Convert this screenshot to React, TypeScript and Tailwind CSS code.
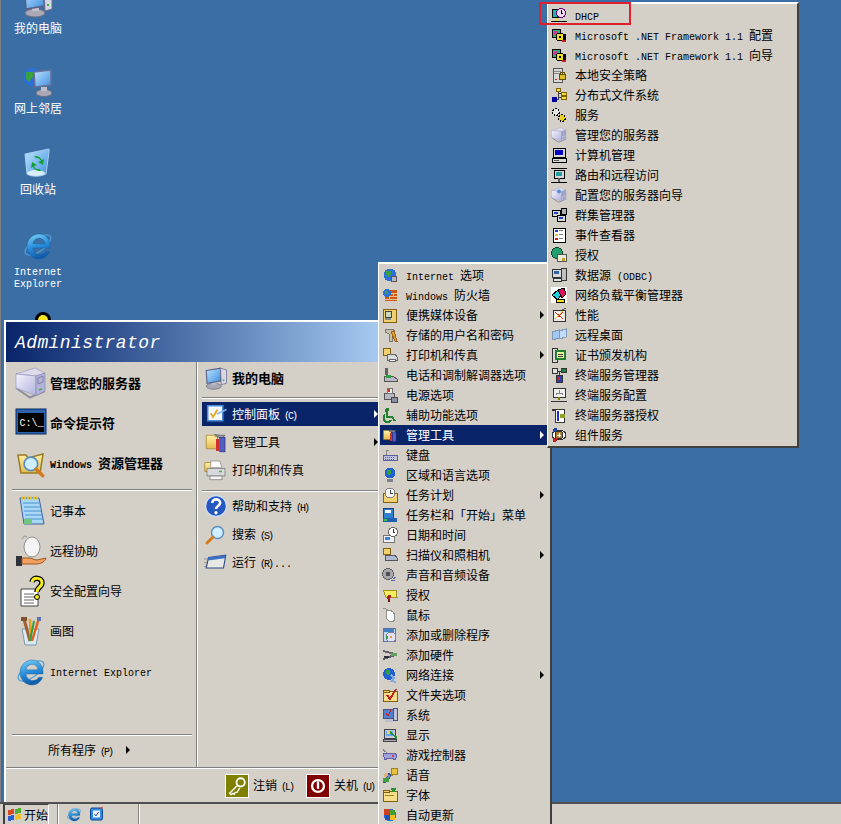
import type { ReactNode } from "react"

// text in the old bitmap style: latin is 6px wide, han is 12px wide
function T({ children, bold }: { children: string; bold?: boolean }) {
  const parts = children.split(/([\x00-\x7f]+)/).filter(Boolean)
  return (
    <span className={bold ? "whitespace-pre font-bold" : "whitespace-pre"}>
      {parts.map((p, i) => {
        if (!/^[\x00-\x7f]/.test(p)) {
          return <span key={i} className={bold ? "text-[13px]" : "text-[12px]"}>{p}</span>
        }
        // mnemonic like " (C)" sits tighter than the rest
        const m = p.match(/^( \(\w\))(.*)$/)
        if (m) {
          return (
            <span key={i} className="font-['Liberation_Mono',monospace] text-[10px]">
              <span className="tracking-[-2px]">{m[1]}</span>
              <span className="ml-[2px]">{m[2]}</span>
            </span>
          )
        }
        return <span key={i} className="font-['Liberation_Mono',monospace] text-[10px]">{p}</span>
      })}
    </span>
  )
}

const S = ({ children }: { children: ReactNode }) => (
  <svg className="h-4 w-4 shrink-0" viewBox="0 0 16 16" shapeRendering="crispEdges">{children}</svg>
)
const M = ({ children, size = 24 }: { children: ReactNode; size?: number }) => (
  <svg style={{ width: size, height: size }} className="shrink-0" viewBox="0 0 32 32">{children}</svg>
)
const L = ({ children }: { children: ReactNode }) => (
  <svg className="h-8 w-8 shrink-0" viewBox="0 0 32 32">{children}</svg>
)

const Defs = () => (
  <svg className="absolute h-0 w-0">
    <defs>
      <linearGradient id="ie" x1="0" y1="0" x2="0.3" y2="1">
        <stop offset="0" stopColor="#7fd4f7" />
        <stop offset="0.55" stopColor="#2b8fdc" />
        <stop offset="1" stopColor="#0f5cab" />
      </linearGradient>
      <linearGradient id="box" x1="0" y1="0" x2="1" y2="1">
        <stop offset="0" stopColor="#f4f4fc" />
        <stop offset="1" stopColor="#b0b0dc" />
      </linearGradient>
      <linearGradient id="screen" x1="0" y1="0" x2="1" y2="1">
        <stop offset="0" stopColor="#bfe4ff" />
        <stop offset="1" stopColor="#3d8fe0" />
      </linearGradient>
      <linearGradient id="fold" x1="0" y1="0" x2="0" y2="1">
        <stop offset="0" stopColor="#fff2a8" />
        <stop offset="1" stopColor="#e6bb50" />
      </linearGradient>
    </defs>
  </svg>
)

/* shared drawings, all on a 32 grid */
const IeShape = () => (
  <>
    <ellipse cx="16" cy="16" rx="15" ry="6.5" transform="rotate(-35 16 16)" fill="none" stroke="#4f9fd8" strokeWidth="1.3" />
    <path
      fillRule="evenodd"
      fill="url(#ie)"
      stroke="#0d5aa0"
      strokeWidth="0.4"
      d="M27 19H11c.5 4 3 6.5 6.7 6.5 2.7 0 4.7-1.1 6-3.2h3.9C25.6 27 22 30 17 30 10.500 30 5 24.500 5 17.500S10.500 5 17 5c7 0 11 5.500 11 12 0 .700 0 1.300-.1 2zM11 14.800h12c-.5-3.400-2.800-5.500-6-5.500s-5.500 2.100-6 5.500z"
    />
  </>
)
const ComputerShape = () => (
  <>
    <ellipse cx="13" cy="27" rx="10" ry="4" fill="#a9a9b8" stroke="#70707c" />
    <rect x="10" y="21" width="7" height="4" fill="#c0c0cc" />
    <path d="M3 6l19-3v17L4 23z" fill="url(#screen)" stroke="#5a5f88" strokeWidth="1.5" />
    <path d="M22 3l8 2v18l-7 2z" fill="#d6d6e4" stroke="#6e6e90" />
    <rect x="25" y="18" width="2" height="2" fill="#33bb33" />
  </>
)
const BoxShape = () => (
  <>
    <path d="M1 21l14 9.500 15-6.500" fill="none" stroke="#90909c" strokeWidth="2" />
    <path d="M1 7L20 1l10 5-9 3z" fill="#dcdcec" stroke="#9090b8" strokeWidth="0.6" />
    <path d="M1 7l20 2v19.500L1 21z" fill="url(#box)" stroke="#9090b8" strokeWidth="0.6" />
    <path d="M21 9l9-3v18l-9 4.500z" fill="#b4b4da" stroke="#8080ac" strokeWidth="0.6" />
    <path d="M23 11l5-2v6l-5 2z" fill="none" stroke="#8080a8" />
    <path d="M24 23l3-1.300" stroke="#44aa44" strokeWidth="1.500" />
  </>
)
const Lens = () => (
  <>
    <circle cx="14" cy="14" r="8" fill="#cfeeff" stroke="#5a8fc0" strokeWidth="2" />
    <path d="M20 20l8 8" stroke="#d47a20" strokeWidth="4" strokeLinecap="round" />
  </>
)
const Printer = () => (
  <>
    <path d="M9 4h12l3 9H9z" fill="#fff" stroke="#888" />
    <path d="M4 14h24v10H4z" fill="#d8d8dc" stroke="#777" />
    <rect x="8" y="24" width="16" height="5" fill="#f4f4f4" stroke="#777" />
    <rect x="20" y="17" width="4" height="2" fill="#4a4" />
  </>
)
const Tools = () => (
  <>
    <path d="M3 7h10l2 2h3v16H3z" fill="url(#fold)" stroke="#a08020" />
    <path d="M14 6l8 1 6 0-5 5z" fill="#a0a0b0" stroke="#555" />
    <rect x="16" y="12" width="4" height="16" fill="#d03030" />
    <rect x="21" y="10" width="7" height="19" fill="#5060c0" stroke="#303080" />
  </>
)

const g = { fold: "#f0d070", line: "#806010", gray: "#a0a0a8", dark: "#404048" }

const SFolder = () => (
  <>
    <rect x="1" y="4" width="14" height="10" fill="#f6de88" stroke={g.line} />
    <rect x="1" y="3" width="6" height="2" fill={g.fold} stroke={g.line} />
  </>
)
const SGlobe = () => (
  <>
    <circle cx="8" cy="8" r="6.500" fill="#2a70d8" />
    <path d="M4 4h5v3l-3 3-2-2zM10 9h3l-1 4-2 0z" fill="#3aa040" />
  </>
)
const SMon = ({ c = "#3060d0" }: { c?: string }) => (
  <>
    <rect x="2" y="2" width="11" height="9" fill="#c8c8d8" stroke={g.dark} />
    <rect x="4" y="4" width="7" height="5" fill={c} />
    <rect x="1" y="12" width="13" height="2" fill="#b0b0b8" stroke={g.dark} />
  </>
)

const controlItems: { label: string; icon: ReactNode; sub?: boolean }[] = [
  { label: "Internet 选项", icon: <S><SGlobe /><rect x="9" y="9" width="5" height="5" fill="#b8b8c4" stroke="#555" /></S> },
  { label: "Windows 防火墙", icon: <S><rect x="3" y="3" width="12" height="11" fill="#c85a18" /><path d="M3 6h12M3 9h12M3 12h12M7 3v3M11 6v3M7 9v3" stroke="#f0c090" /><circle cx="5" cy="6" r="4" fill="#2a70d8" /><rect x="3" y="4" width="3" height="3" fill="#3aa040" /></S> },
  { label: "便携媒体设备", sub: true, icon: <S><rect x="1" y="2" width="13" height="13" fill={g.fold} stroke={g.line} /><rect x="3" y="4" width="6" height="6" fill="#c8d8c0" stroke="#444" /><rect x="3" y="11" width="6" height="2" fill="#888" /></S> },
  { label: "存储的用户名和密码", icon: <S><path d="M3 2h8l2 3-3 2v7H7V7L3 5z" fill="#c8c0a8" stroke="#777" /><path d="M9 5l4 9h2l-3-10z" fill="#e0a030" stroke="#a06010" /></S> },
  { label: "打印机和传真", sub: true, icon: <S><rect x="1" y="1" width="7" height="7" fill={g.fold} stroke={g.line} /><path d="M5 7h8l2 3v3H5z" fill="#d8dce0" stroke="#666" /><rect x="7" y="12" width="6" height="2" fill="#fff" stroke="#666" /></S> },
  { label: "电话和调制解调器选项", icon: <S><rect x="3" y="1" width="3" height="7" fill="#606068" /><path d="M2 9h9l4 3v2H2z" fill="#b8b8c8" stroke="#555" /><rect x="4" y="8" width="5" height="3" fill="#30a040" /></S> },
  { label: "电源选项", icon: <S><rect x="2" y="6" width="10" height="6" fill="#b8b8c4" stroke="#555" /><rect x="5" y="1" width="5" height="5" fill="#f0f0f0" stroke="#777" /><rect x="6" y="2" width="2" height="3" fill="#d83030" /><rect x="9" y="10" width="6" height="5" fill="#8890a8" stroke="#444" /></S> },
  { label: "辅助功能选项", icon: <S><circle cx="5" cy="3" r="2" fill="#208030" /><path d="M5 5v5h5l3 4" fill="none" stroke="#208030" strokeWidth="2" /><path d="M3 8a4 4 0 1 0 6 5" fill="none" stroke="#208030" strokeWidth="2" /></S> },
  { label: "管理工具", sub: true, icon: <M size={16}><Tools /></M> },
  { label: "键盘", icon: <S><path d="M1 8h14v5H1z" fill="#c0c0e0" stroke="#6060a0" /><path d="M3 10h10M3 12h10" stroke="#6060a0" strokeDasharray="1 1" /><path d="M4 8V3h3" fill="none" stroke="#888" /></S> },
  { label: "区域和语言选项", icon: <S><circle cx="8" cy="6" r="5.500" fill="#2060d0" /><path d="M5 3h4v3l-2 3-2-2z" fill="#30a040" /><rect x="5" y="12" width="6" height="3" fill="#808088" /></S> },
  { label: "任务计划", sub: true, icon: <S><rect x="1" y="6" width="14" height="9" fill={g.fold} stroke={g.line} /><circle cx="8" cy="6" r="5" fill="#f4f4f4" stroke="#808080" /><path d="M8 3v3h3" fill="none" stroke="#444" /></S> },
  { label: "任务栏和「开始」菜单", icon: <S><rect x="1" y="1" width="10" height="10" fill="#3080d0" stroke="#204080" /><rect x="3" y="3" width="6" height="3" fill="#fff" /><rect x="1" y="11" width="14" height="4" fill="#2060b0" /><rect x="2" y="12" width="3" height="2" fill="#40c040" /></S> },
  { label: "日期和时间", icon: <S><rect x="1" y="8" width="11" height="7" fill="#f0f0f4" stroke="#777" /><circle cx="11" cy="5" r="4.500" fill="#fff" stroke="#666" /><path d="M11 2v3h2" fill="none" stroke="#333" /><rect x="3" y="10" width="5" height="3" fill="#4080d0" /></S> },
  { label: "扫描仪和照相机", sub: true, icon: <S><rect x="1" y="1" width="7" height="6" fill={g.fold} stroke={g.line} /><path d="M3 8h10l2 3v2H3z" fill="#b0b8d0" stroke="#556" /><rect x="5" y="13" width="8" height="1" fill="#555" /></S> },
  { label: "声音和音频设备", icon: <S><circle cx="6" cy="7" r="5.500" fill="#a8a8ac" stroke="#606064" /><circle cx="6" cy="7" r="2.500" fill="#505054" /><path d="M11 12l3-2M9 14l4-1" stroke="#6060c0" /></S> },
  { label: "授权", icon: <S><path d="M1 3h13l1 7H4z" fill="#f4ee60" stroke="#a09020" /><circle cx="7" cy="10" r="2" fill="#b02020" /><rect x="6" y="12" width="2" height="3" fill="#701010" /></S> },
  { label: "鼠标", icon: <S><path d="M6 3c4 0 7 3 7 7s-2 5-4 5-5-3-5-7c0-3 0-5 2-5z" fill="#fafafa" stroke="#909090" /><path d="M1 1c2 0 3 1 5 2" fill="none" stroke="#909090" /></S> },
  { label: "添加或删除程序", icon: <S><rect x="1" y="1" width="12" height="13" fill="#c0d8f0" stroke="#6070a0" /><rect x="2" y="2" width="10" height="3" fill="#4080c0" /><circle cx="9" cy="10" r="5" fill="#e0e0f8" stroke="#8080a0" /><circle cx="9" cy="10" r="1.500" fill="#e0a030" /><rect x="4" y="9" width="2" height="3" fill="#30a040" /></S> },
  { label: "添加硬件", icon: <S><path d="M1 4l12 3M1 12l12-4" stroke="#606068" strokeWidth="2" /><rect x="9" y="6" width="6" height="3" fill="#60a060" /><rect x="2" y="9" width="5" height="2" fill="#303038" /></S> },
  { label: "网络连接", sub: true, icon: <S><circle cx="7" cy="7" r="6" fill="#2060d0" /><path d="M4 3h4v3L6 9 4 7z" fill="#30a040" /><path d="M9 8l3 3-2 3 4 1" fill="none" stroke="#80a8e0" strokeWidth="2" /></S> },
  { label: "文件夹选项", icon: <S><SFolder /><path d="M5 8l3 4 6-10" fill="none" stroke="#c02020" strokeWidth="2" /></S> },
  { label: "系统", icon: <S><rect x="1" y="2" width="10" height="9" fill="#5080d0" stroke="#505080" /><path d="M4 6l2 3 3-6" fill="none" stroke="#d02020" /><rect x="11" y="1" width="4" height="12" fill="#c0c0d8" stroke="#505080" /><rect x="3" y="12" width="8" height="3" fill="#c0c0c8" /></S> },
  { label: "显示", icon: <S><SMon c="#60a8f0" /><path d="M8 5l7 6" stroke="#309030" strokeWidth="2" /><rect x="5" y="4" width="3" height="3" fill="#f0d060" /></S> },
  { label: "游戏控制器", icon: <S><path d="M1 7l4-1h8l2 3-2 4-3-2H6l-3 2z" fill="#a0a0e0" stroke="#6060a0" /><path d="M1 2c1 2 3 3 4 4" fill="none" stroke="#808088" /><rect x="10" y="8" width="2" height="2" fill="#d04040" /></S> },
  { label: "语音", icon: <S><path d="M9 1h6v6h-3l-3 2z" fill="#e8c040" stroke="#a08020" /><path d="M7 6l2 3-5 6H2z" fill="#7090d0" stroke="#405080" /><circle cx="4" cy="8" r="2" fill="#e0b080" /><rect x="1" y="11" width="6" height="4" fill="#40a040" /></S> },
  { label: "字体", icon: <S><SFolder /><path d="M9 1l5 0-1 4h-3z" fill="#309030" /><rect x="3" y="8" width="9" height="1" fill="#a08020" /></S> },
  { label: "自动更新", icon: <S><circle cx="8" cy="8" r="6.500" fill="#2a70d8" /><rect x="2" y="2" width="6" height="6" fill="#d04020" /><rect x="8" y="3" width="5" height="5" fill="#40a030" /><rect x="3" y="8" width="5" height="5" fill="#2050c0" /><rect x="8" y="8" width="5" height="5" fill="#f0c020" /></S> },
]

const NetGear = () => (
  <S>
    <rect x="1" y="2" width="8" height="8" fill="#30b070" stroke="#000" />
    <rect x="3" y="4" width="4" height="4" fill="#c04090" />
    <circle cx="9" cy="10" r="4" fill="#f0e020" stroke="#000" />
    <rect x="8" y="9" width="2" height="2" fill="#000" />
    <rect x="12" y="7" width="3" height="6" fill="#000" />
    <rect x="11" y="13" width="4" height="2" fill="#c02020" />
  </S>
)

const adminItems: { label: string; icon: ReactNode }[] = [
  { label: "DHCP", icon: <S><rect x="1" y="2" width="7" height="8" fill="#20b0b0" stroke="#000" /><circle cx="10" cy="6" r="4.500" fill="#f0d8f0" stroke="#700070" /><path d="M10 3v3h2" fill="none" stroke="#000" /><rect x="5" y="11" width="2" height="3" fill="#e0e020" /><path d="M0 14h16" stroke="#000" /></S> },
  { label: "Microsoft .NET Framework 1.1 配置", icon: <NetGear /> },
  { label: "Microsoft .NET Framework 1.1 向导", icon: <NetGear /> },
  { label: "本地安全策略", icon: <S><rect x="2" y="1" width="9" height="14" fill="#d8d8d8" stroke="#555" /><path d="M3 4h7M3 6h7" stroke="#888" /><rect x="4" y="12" width="2" height="1" fill="#d02020" /><rect x="8" y="7" width="6" height="5" fill="#e0c020" stroke="#605000" /><path d="M9 7V5h4v2" fill="none" stroke="#605000" /></S> },
  { label: "分布式文件系统", icon: <S><path d="M7 3v9M7 6h4M7 10h4M5 12h3" fill="none" stroke="#444" /><rect x="5" y="1" width="4" height="3" fill="#f0e040" stroke="#806000" /><rect x="10" y="5" width="5" height="3" fill="#f0e040" stroke="#806000" /><rect x="10" y="9" width="5" height="3" fill="#f0e040" stroke="#806000" /><rect x="1" y="10" width="5" height="5" fill="#0000a0" /></S> },
  { label: "服务", icon: <S><circle cx="5" cy="5" r="3.500" fill="#e8e8e8" stroke="#000" strokeDasharray="2 1" strokeWidth="1.500" /><circle cx="11" cy="11" r="3.500" fill="#e8d020" stroke="#000" strokeDasharray="2 1" strokeWidth="1.500" /></S> },
  { label: "管理您的服务器", icon: <M size={16}><BoxShape /></M> },
  { label: "计算机管理", icon: <S><rect x="2" y="1" width="12" height="9" fill="#d8d8d8" stroke="#000" /><rect x="4" y="3" width="8" height="5" fill="#0000c0" /><rect x="1" y="11" width="14" height="4" fill="#d8d8d8" stroke="#000" /><rect x="3" y="13" width="5" height="1" fill="#606060" /></S> },
  { label: "路由和远程访问", icon: <S><path d="M0 1h16M0 15h16" stroke="#000" /><rect x="3" y="3" width="10" height="8" fill="#d8d8d8" stroke="#000" /><rect x="5" y="5" width="6" height="4" fill="#20a0a0" /><rect x="7" y="11" width="2" height="4" fill="#606060" /></S> },
  { label: "配置您的服务器向导", icon: <M size={16}><BoxShape /><circle cx="16" cy="9" r="4" fill="#5090e0" /></M> },
  { label: "群集管理器", icon: <S><rect x="1" y="3" width="8" height="6" fill="#d8d8d8" stroke="#000" /><rect x="3" y="5" width="4" height="2" fill="#2040c0" /><rect x="6" y="8" width="8" height="6" fill="#d8d8d8" stroke="#000" /><rect x="8" y="10" width="4" height="2" fill="#2040c0" /><rect x="10" y="1" width="5" height="6" fill="#b0b0b0" stroke="#000" /></S> },
  { label: "事件查看器", icon: <S><rect x="2" y="1" width="12" height="14" fill="#fff" stroke="#000" /><rect x="4" y="3" width="3" height="2" fill="#2040d0" /><rect x="8" y="3" width="4" height="1" fill="#808080" /><rect x="4" y="7" width="3" height="2" fill="#e0c020" /><rect x="8" y="7" width="4" height="1" fill="#808080" /><rect x="4" y="11" width="3" height="2" fill="#d02020" /><rect x="8" y="11" width="4" height="1" fill="#808080" /></S> },
  { label: "授权", icon: <S><circle cx="6" cy="6" r="5.500" fill="#20a070" stroke="#104030" /><rect x="6" y="7" width="9" height="7" fill="#e8e8d8" stroke="#555" /><rect x="11" y="11" width="3" height="3" fill="#c0a020" /></S> },
  { label: "数据源 (ODBC)", icon: <S><rect x="1" y="2" width="9" height="8" fill="#d8d8d8" stroke="#333" /><rect x="3" y="4" width="5" height="3" fill="#3060b0" /><rect x="10" y="1" width="5" height="12" fill="#c0c0c0" stroke="#333" /><rect x="2" y="11" width="8" height="3" fill="#e0e0e0" stroke="#333" /></S> },
  { label: "网络负载平衡管理器", icon: <S><rect x="0" y="0" width="16" height="16" fill="#fff" /><path d="M1 8l6-5 3 5-3 5z" fill="#20d0e0" stroke="#000" /><path d="M7 3l6-2 2 6-4 4z" fill="#e01060" stroke="#000" /><rect x="5" y="12" width="8" height="3" fill="#f0e020" stroke="#000" /></S> },
  { label: "性能", icon: <S><rect x="2" y="3" width="12" height="11" fill="#e8e8e8" stroke="#333" /><rect x="4" y="5" width="8" height="7" fill="#fffff0" /><path d="M4 5l8 7M12 5l-8 7" stroke="#d02020" /><path d="M4 12l3-3 5-5" stroke="#e0c020" /><path d="M11 3l4-2" stroke="#555" /></S> },
  { label: "远程桌面", icon: <S><path d="M1 5l7-2v8l-7 2z" fill="#a0c8f0" stroke="#8098b8" /><path d="M8 4l7-2v8l-7 2z" fill="#c0dcf8" stroke="#8098b8" /></S> },
  { label: "证书颁发机构", icon: <S><rect x="1" y="1" width="5" height="14" fill="#d8d8d8" stroke="#333" /><rect x="4" y="3" width="11" height="10" fill="#208030" /><rect x="6" y="5" width="7" height="6" fill="#f0f0a0" /><path d="M7 7h5M7 9h5" stroke="#404040" /></S> },
  { label: "终端服务管理器", icon: <S><rect x="1" y="1" width="5" height="5" fill="#e0e0e0" stroke="#333" /><rect x="10" y="1" width="5" height="4" fill="#208040" stroke="#333" /><path d="M6 4h4M8 4v5" fill="none" stroke="#333" /><rect x="5" y="8" width="6" height="7" fill="#2040c0" stroke="#333" /><rect x="7" y="10" width="2" height="3" fill="#e02020" /></S> },
  { label: "终端服务配置", icon: <S><rect x="2" y="1" width="12" height="9" fill="#f0f0f0" stroke="#333" /><path d="M8 3v3M5 8V6h6v2" fill="none" stroke="#808080" /><rect x="7" y="10" width="2" height="3" fill="#808000" /><path d="M0 14h16" stroke="#333" /></S> },
  { label: "终端服务器授权", icon: <S><path d="M1 3h9" stroke="#333" strokeWidth="2" /><rect x="4" y="2" width="9" height="13" fill="#fff" stroke="#333" /><rect x="6" y="4" width="2" height="10" fill="#2030c0" /><rect x="9" y="7" width="5" height="4" fill="#90a020" /></S> },
  { label: "组件服务", icon: <S><ellipse cx="8" cy="8" rx="7" ry="5" fill="#fff" stroke="#333" /><circle cx="8" cy="8" r="4" fill="#b08030" stroke="#333" /><path d="M6 8h4M8 6v4" stroke="#fff" /><circle cx="4" cy="3" r="2" fill="#2040a0" /><circle cx="4" cy="13" r="2" fill="#c02020" /></S> },
]

const Arrow = () => <span className="h-0 w-0 shrink-0 border-y-[4px] border-l-[4px] border-y-transparent border-l-current" />

const Sep = ({ className }: { className: string }) => (
  <div className={`h-[2px] border-t border-b border-t-[#808080] border-b-white ${className}`} />
)

function DesktopIcon({ icon, label, className }: { icon: ReactNode; label: ReactNode; className: string }) {
  return (
    <div className={`absolute flex w-[72px] flex-col items-center text-center leading-[12px] text-white ${className}`}>
      {icon}
      <div className="mt-[4px]">{label}</div>
    </div>
  )
}

function BigRow({ icon, label, bold }: { icon: ReactNode; label: string; bold?: boolean }) {
  return (
    <div className="flex h-10 items-center gap-[3px] pl-[9px]">
      {icon}
      <T bold={bold}>{label}</T>
    </div>
  )
}

function PlaceRow({ icon, label, bold, active, sub }: { icon: ReactNode; label: string; bold?: boolean; active?: boolean; sub?: boolean }) {
  return (
    <div className={active ? "flex h-6 items-center gap-1 bg-[#0a246a] pl-[2px] pr-[1px] text-white" : "flex h-6 items-center gap-1 pl-[2px] pr-[1px]"}>
      {icon}
      <T bold={bold}>{label}</T>
      {sub && <span className="ml-auto flex"><Arrow /></span>}
    </div>
  )
}

export default function App() {
  return (
    <div className="relative h-[824px] w-[841px] overflow-hidden bg-[#3a6ea5] font-['Noto_Sans_CJK_SC',sans-serif] text-[12px] text-black">
      <Defs />
      <div className="absolute inset-y-0 left-0 w-[1px] bg-[#808080]" />

      {/* desktop icons */}
      <DesktopIcon className="left-[2px] top-[-14px]" label={<T>我的电脑</T>} icon={<L><ComputerShape /></L>} />
      <DesktopIcon className="left-[2px] top-[66px]" label={<T>网上邻居</T>} icon={<L><circle cx="10" cy="11" r="9" fill="#2a70d8" /><path d="M4 6h7v5l-4 5-3-3z" fill="#3aa040" /><path d="M12 6l17-2v15l-16 2z" fill="url(#screen)" stroke="#6a6f98" strokeWidth="1.500" /><ellipse cx="22" cy="27" rx="8" ry="3.500" fill="#a9a9b8" stroke="#70707c" /><rect x="19" y="21" width="6" height="4" fill="#c0c0cc" /></L>} />
      <DesktopIcon className="left-[2px] top-[147px]" label={<T>回收站</T>} icon={<L><path d="M3 7l24-5 0 3-3 22c-6 3-14 3-19 0z" fill="url(#screen)" stroke="#a8d0f0" /><ellipse cx="14" cy="26" rx="9" ry="3" fill="#d8ecfa" /><path d="M14 11a5 5 0 0 1 5 3l-3 1 5 3 1-6-2 1a8 8 0 0 0-8-4zM18 22a5 5 0 0 1-6-3l3-1-5-3-1 6 2-1a8 8 0 0 0 8 4z" fill="#10a030" /></L>} />
      <DesktopIcon
        className="left-[2px] top-[229px]"
        label={
          <div className="-mt-[1px] flex flex-col">
            <div className="h-3"><T>Internet</T></div>
            <div className="h-3"><T>Explorer</T></div>
          </div>
        }
        icon={<L><IeShape /></L>}
      />
      <div className="absolute left-[35px] top-[312px] h-[16px] w-[16px] rounded-full border-[3px] border-black bg-[#f8e820]" />

      {/* start menu */}
      <div className="absolute left-[4px] top-[320px] flex w-[375px] flex-col border-l-2 border-t-2 border-white bg-[#d4d0c8]">
        <div className="flex h-10 items-center bg-gradient-to-r from-[#0a246a] to-[#a6caf0] pl-[9px] pt-[2px] font-['Liberation_Mono',monospace] text-[18px] italic tracking-[0.4px] text-white">
          Administrator
        </div>
        <div className="flex h-[405px]">
          <div className="flex w-[190px] flex-col pt-px">
            <BigRow bold label="管理您的服务器" icon={<L><BoxShape /></L>} />
            <BigRow bold label="命令提示符" icon={<L><rect x="1" y="2" width="30" height="25" fill="#2a62b0" stroke="#0a2a60" /><rect x="3" y="6" width="26" height="19" fill="#000" /><text x="4.500" y="19" fill="#fff" fontSize="10" fontFamily="Liberation Mono">C:\_</text></L>} />
            <BigRow bold label="Windows 资源管理器" icon={<L><path d="M3 8h8l2 3 15-4-3 19H6z" fill="url(#fold)" stroke="#9a7a20" strokeWidth="1.500" /><g transform="translate(4 5) scale(.85)"><Lens /></g></L>} />
            <Sep className="ml-[6px] mr-[4px] mt-[6px]" />
            <BigRow label="记事本" icon={<L><path d="M5 3h19l5 26H9z" fill="#a8d8f4" stroke="#4060a0" /><path d="M8 8h16M9 12h16M9 16h17M10 20h17M10 24h18" stroke="#4a90d0" /><path d="M6 3h18" stroke="#e0c030" strokeWidth="3" strokeDasharray="2 1" /><path d="M9 24h8v5H9z" fill="#70c880" /></L>} />
            <BigRow label="远程协助" icon={<L><ellipse cx="17" cy="12" rx="8" ry="10" fill="#f4f4f4" stroke="#909090" /><path d="M12 2c-3-2-5 0-4 2" fill="none" stroke="#909090" /><rect x="1" y="21" width="6" height="10" fill="#303038" /><path d="M7 23h7c3 0 5 2 8 2l9-2c0 3-5 6-10 6H7z" fill="#f0a060" stroke="#a05820" /></L>} />
            <BigRow label="安全配置向导" icon={<L><path d="M6 14h14l3 3v14H6z" fill="#fff" stroke="#444" /><path d="M9 19h10M9 22h10M9 25h10M9 28h10" stroke="#666" /><path d="M17 7c1-5 10-5 10 1 0 4-5 4-5 9" fill="none" stroke="#000" strokeWidth="5.500" /><path d="M17 7c1-5 10-5 10 1 0 4-5 4-5 9" fill="none" stroke="#f8ec20" strokeWidth="3" /><circle cx="22" cy="22" r="2.500" fill="#f8ec20" stroke="#000" /></L>} />
            <BigRow label="画图" icon={<L><path d="M7 14h17l-3 16H10z" fill="#d8ecf4" stroke="#8098a8" /><path d="M9 4l6 22" stroke="#a06030" strokeWidth="3" /><path d="M15 4l1 22" stroke="#e0a020" strokeWidth="2.500" /><path d="M24 3l-7 23" stroke="#e06020" strokeWidth="2.500" /><path d="M19 6l-4 20" stroke="#30a040" strokeWidth="2" /><rect x="6" y="2" width="6" height="4" fill="#805030" /><rect x="22" y="2" width="4" height="4" fill="#6070b0" /></L>} />
            <BigRow label="Internet Explorer" icon={<L><IeShape /></L>} />
            <Sep className="ml-[6px] mr-[4px] mt-auto" />
            <div className="mb-[3px] flex h-7 items-center gap-[12px] pl-[42px]">
              <T>所有程序 (P)</T>
              <Arrow />
            </div>
          </div>
          <div className="w-[2px] border-l border-r border-l-[#808080] border-r-white" />
          <div className="flex flex-1 flex-col pl-[4px] pt-[4px]">
            <PlaceRow bold label="我的电脑" icon={<M><ComputerShape /></M>} />
            <Sep className="mt-[7px] mb-[3px]" />
            <div className="flex flex-col gap-1">
              <PlaceRow active sub label="控制面板 (C)" icon={<M><rect x="3" y="3" width="24" height="24" fill="#5088d8" stroke="#0a2a70" strokeWidth="2" /><rect x="6" y="6" width="18" height="18" fill="#f4f8ff" /><path d="M9 15l3 5 6-10" fill="none" stroke="#e8a820" strokeWidth="2.500" /><path d="M17 16l13-6" stroke="#80b8f0" strokeWidth="2" /></M>} />
              <PlaceRow sub label="管理工具" icon={<M><Tools /></M>} />
              <PlaceRow label="打印机和传真" icon={<M><path d="M1 6h10v12H1z" fill="url(#fold)" stroke="#a08020" /><Printer /></M>} />
            </div>
            <Sep className="mt-2 mb-[2px]" />
            <div className="flex flex-col gap-1">
              <PlaceRow label="帮助和支持 (H)" icon={<M><circle cx="16" cy="16" r="14" fill="#2458c0" stroke="#d0dcf0" strokeWidth="2" /><path d="M11 12c0-6.500 10.500-6.500 10.500 0 0 4-5.500 4-5.500 8" fill="none" stroke="#fff" strokeWidth="3.500" /><circle cx="16" cy="25" r="2.200" fill="#fff" /></M>} />
              <PlaceRow label="搜索 (S)" icon={<M><g transform="scale(-1 1) translate(-32 0)"><Lens /></g></M>} />
              <PlaceRow label="运行 (R)..." icon={<M><path d="M6 10l23-3-3 17H3z" fill="#e8e8e4" stroke="#304880" strokeWidth="1.500" /><path d="M6 10l23-3-1 4-23 3z" fill="#3a70c8" /><path d="M0 12h5M0 17h4M0 22h3" stroke="#808080" /></M>} />
            </div>
          </div>
        </div>
        <Sep className="" />
        <div className="flex h-[33px] items-center pl-[219px]">
          <div className="flex w-[81px] items-center gap-1">
            <svg className="h-6 w-6 shrink-0 border border-white bg-[#808000]" viewBox="0 0 24 24">
              <circle cx="16" cy="8" r="4.500" fill="none" stroke="#fff" strokeWidth="2" />
              <path d="M13 11l-9 9 1.500 1.500 2-1.500 1.500 1 1-2 2 0 3-5" fill="none" stroke="#fff" strokeWidth="1.500" />
            </svg>
            <T>注销 (L)</T>
          </div>
          <div className="flex items-center gap-1">
            <svg className="h-6 w-6 shrink-0 border border-white bg-[#800000]" viewBox="0 0 24 24">
              <circle cx="12" cy="12" r="6.500" fill="none" stroke="#fff" strokeWidth="2.500" />
              <path d="M12 7v8" stroke="#fff" strokeWidth="2.500" />
            </svg>
            <T>关机 (U)</T>
          </div>
        </div>
      </div>

      {/* taskbar */}
      <div className="absolute inset-x-0 bottom-0 flex h-[22px] items-center border-t-2 border-t-[#505050] bg-[#d4d0c8]">
        <div className="ml-[3px] flex h-full w-[46px] items-center gap-[1px] border-l-2 border-t border-r border-l-[#404040] border-t-[#404040] border-r-white pl-[2px]">
          <S>
            <path d="M1 3l6-1v5l-6 1z" fill="#d84a20" />
            <path d="M8 2l6-1v5l-6 1z" fill="#50b030" />
            <path d="M1 9l6-1v5l-6 1z" fill="#2860d0" />
            <path d="M8 8l6-1v5l-6 1z" fill="#f0c020" />
          </S>
          <T>开始</T>
        </div>
        <div className="ml-[8px] h-full w-[2px] border-l border-r border-l-[#808080] border-r-white" />
        <div className="ml-[7px] flex gap-[7px]">
          <M size={16}><IeShape /></M>
          <M size={16}><rect x="3" y="4" width="24" height="24" rx="3" fill="#3088e0" stroke="#104890" strokeWidth="2" /><rect x="8" y="9" width="14" height="14" fill="#f0f4ff" /><path d="M11 16l3 4 5-8" fill="none" stroke="#2050b0" strokeWidth="2" /><path d="M22 5l6-3" stroke="#e04020" strokeWidth="2" /></M>
        </div>
        <div className="ml-[33px] h-full w-[2px] border-l border-r border-l-[#808080] border-r-white" />
      </div>

      {/* control panel flyout */}
      <div className="absolute left-[378px] top-[262px] w-[174px] border-b border-l border-r-2 border-t-2 border-b-[#404040] border-l-white border-r-[#404040] border-t-white bg-[#d4d0c8] pl-px pt-px">
        {controlItems.map((item) => (
          <div
            key={item.label}
            className={item.label === "管理工具" ? "flex h-5 items-center gap-[8px] bg-[#0a246a] pl-[2px] pr-[6px] text-white" : "flex h-5 items-center gap-[8px] pl-[2px] pr-[6px]"}
          >
            {item.icon}
            <T>{item.label}</T>
            {item.sub && <span className="ml-auto flex"><Arrow /></span>}
          </div>
        ))}
      </div>

      {/* administrative tools flyout */}
      <div className="absolute left-[547px] top-[2px] w-[252px] border-b-2 border-l border-r-2 border-t-2 border-b-[#404040] border-l-white border-r-[#404040] border-t-white bg-[#d4d0c8] pb-px pt-px">
        {adminItems.map((item) => (
          <div key={item.label} className="flex h-5 items-center gap-[8px] pl-[3px]">
            {item.icon}
            <T>{item.label}</T>
          </div>
        ))}
      </div>

      {/* red note over the DHCP row */}
      <div className="absolute left-[539px] top-[2px] h-[23px] w-[92px] border-2 border-[#e0202c]" />
    </div>
  )
}
